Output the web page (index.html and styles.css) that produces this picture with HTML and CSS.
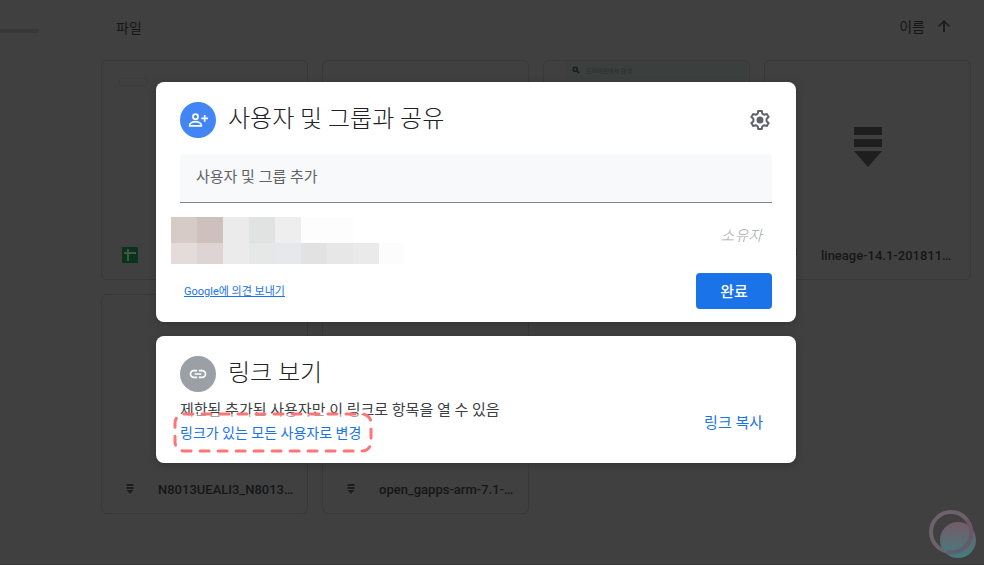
FILE: index.html
```html
<!DOCTYPE html>
<html lang="ko">
<head>
    <meta charset="UTF-8">
    <meta name="viewport" content="width=device-width, initial-scale=1.0">
    <title>사용자 및 그룹과 공유</title>
    <link rel="stylesheet" href="styles.css">
</head>
<body>
<svg class="sprite" aria-hidden="true">
    <symbol id="zip" viewBox="0 0 28 40">
        <path d="M0 0h28v8H0zM0 12h28v8H0zM0 24h28L14 40z"/>
    </symbol>
</svg>

<!-- Drive page, dimmed by the open dialog -->
<div class="drive">
    <aside class="sidebar">
        <div class="storage-bar"></div>
    </aside>
    <main class="files">
        <header class="files-header">
            <h2 class="files-title">파일</h2>
            <button class="sort" type="button">이름
                <svg class="sort-icon" viewBox="0 0 24 24"><path d="M4 12l1.400 1.400L10.800 8v12h2.400V8l5.400 5.400L20 12l-8-8z"/></svg>
            </button>
        </header>
        <div class="grid">
            <div class="card">
                <div class="preview"><div class="sheet-box"></div></div>
                <div class="card-name">
                    <svg class="sheet-icon" viewBox="0 0 16 16">
                        <rect width="16" height="16" rx="1" fill="#08331d"/>
                        <path d="M2 6h12M6 2v12" stroke="#4a524e" stroke-width="2"/>
                    </svg>
                </div>
            </div>
            <div class="card">
                <div class="preview"></div>
            </div>
            <div class="card">
                <div class="preview">
                    <div class="shot">
                        <svg class="shot-icon" viewBox="0 0 10 10"><circle cx="4" cy="4" r="2.500"/><path d="M6 6l3 3"/></svg>
                        <span>드라이브에서 검색</span>
                    </div>
                </div>
            </div>
            <div class="card">
                <div class="preview preview-zip"><svg class="zip-large"><use href="#zip"/></svg></div>
                <div class="card-name">
                    <svg class="zip-small"><use href="#zip"/></svg>
                    <span>lineage-14.1-201811…</span>
                </div>
            </div>
            <div class="card">
                <div class="preview"></div>
                <div class="card-name">
                    <svg class="zip-small"><use href="#zip"/></svg>
                    <span>N8013UEALI3_N8013…</span>
                </div>
            </div>
            <div class="card">
                <div class="preview"></div>
                <div class="card-name">
                    <svg class="zip-small"><use href="#zip"/></svg>
                    <span>open_gapps-arm-7.1-…</span>
                </div>
            </div>
        </div>
    </main>
</div>

<!-- Share dialog -->
<div class="overlay">
    <section class="panel share">
        <header class="panel-header">
            <span class="badge badge-blue">
                <svg viewBox="0 0 24 24">
                    <g fill="none" stroke="#fff" stroke-width="2">
                        <circle cx="9" cy="8" r="3"/>
                        <path d="M2 19v-1c0-2.700 4.700-4 7-4s7 1.300 7 4v1zM20 6v8M16 10h8"/>
                    </g>
                </svg>
            </span>
            <h1 class="panel-title">사용자 및 그룹과 공유</h1>
            <button class="settings" type="button" aria-label="설정">
                <svg viewBox="0 0 24 24">
                    <path d="M10.200 3h3.600l.5 2.600 2 1.200 2.500-.9 1.800 3.100-2 1.700v2.600l2 1.700-1.800 3.100-2.500-.9-2 1.200-.5 2.600h-3.600l-.5-2.600-2-1.200-2.500.9L3.400 15l2-1.700v-2.600L3.400 9l1.800-3.100 2.500.9 2-1.200z" fill="none" stroke="#5f6368" stroke-width="2" stroke-linejoin="round"/>
                    <circle cx="12" cy="12" r="3.500" fill="#5f6368"/>
                </svg>
            </button>
        </header>
        <input class="people" type="text" placeholder="사용자 및 그룹 추가" aria-label="사용자 및 그룹 추가">
        <div class="owner">
            <!-- pixelated account -->
            <svg class="mosaic" viewBox="0 0 234 47" shape-rendering="crispEdges" aria-hidden="true">
                <rect width="26" height="26" fill="#d7cbc7"/>
                <rect x="26" width="26" height="26" fill="#cec0bd"/>
                <rect x="52" width="26" height="47" fill="#ebebeb"/>
                <rect x="78" width="26" height="26" fill="#e0e3e2"/>
                <rect x="104" width="26" height="26" fill="#eeeeee"/>
                <rect x="130" width="52" height="26" fill="#fdfdfd"/>
                <rect y="26" width="26" height="21" fill="#e4dbdb"/>
                <rect x="26" y="26" width="26" height="21" fill="#ded4d2"/>
                <rect x="78" y="26" width="26" height="21" fill="#e5e8e7"/>
                <rect x="104" y="26" width="26" height="21" fill="#e6e8eb"/>
                <rect x="130" y="26" width="26" height="21" fill="#e2e2e2"/>
                <rect x="156" y="26" width="26" height="21" fill="#e7e7e7"/>
                <rect x="182" y="26" width="26" height="21" fill="#eaeaea"/>
                <rect x="208" y="26" width="25" height="21" fill="#fcfcfc"/>
            </svg>
            <span class="role">소유자</span>
        </div>
        <footer class="share-footer">
            <a class="feedback" href="#">Google에 의견 보내기</a>
            <button class="done" type="button">완료</button>
        </footer>
    </section>

    <section class="panel link">
        <header class="panel-header">
            <span class="badge badge-gray">
                <svg viewBox="0 0 24 24">
                    <path d="M11 8H7a4 4 0 0 0 0 8h4M13 8h4a4 4 0 0 1 0 8h-4M8 12h8" fill="none" stroke="#fff" stroke-width="2"/>
                </svg>
            </span>
            <h2 class="panel-title">링크 보기</h2>
        </header>
        <div class="link-body">
            <div class="link-text">
                <p class="link-desc">제한됨 추가된 사용자만 이 링크로 항목을 열 수 있음</p>
                <div class="change">
                    <svg class="marker" viewBox="0 0 200 42" aria-hidden="true">
                        <rect x="2" y="2" width="196" height="37" rx="9"/>
                    </svg>
                    <a class="change-link" href="#">링크가 있는 모든 사용자로 변경</a>
                </div>
            </div>
            <button class="copy" type="button">링크 복사</button>
        </div>
    </section>
</div>

<!-- Watermark -->
<svg class="watermark" viewBox="0 0 48 48" aria-hidden="true">
    <defs>
        <linearGradient id="fade" x1="0" y1="0" x2="0" y2="1">
            <stop offset="0" stop-color="#755b66"/>
            <stop offset="1" stop-color="#457c80"/>
        </linearGradient>
    </defs>
    <circle cx="22" cy="22" r="20" fill="none" stroke="#6d616a" stroke-width="4"/>
    <circle cx="29" cy="30" r="18" fill="url(#fade)"/>
    <path d="M38 10A20 20 0 0 1 18 42" fill="none" stroke="#6b4f66" stroke-width="4" opacity="0.6"/>
</svg>
</body>
</html>
```

FILE: styles.css
```css
* {
    box-sizing: border-box;
}
body {
    margin: 0;
    min-height: 100vh;
    background: #404040;
    color: #161617;
    font-family: Roboto, "Noto Sans CJK KR", sans-serif;
    font-size: 15px;
    overflow: hidden;
}
h1, h2, p {
    margin: 0;
    font-weight: 400;
}
button {
    border: none;
    padding: 0;
    background: none;
    font: inherit;
    color: inherit;
    cursor: pointer;
}
svg {
    display: block;
}
.sprite {
    display: none;
}

/* Drive page */
.drive {
    display: flex;
    min-height: 100vh;
    border-bottom: 1px solid #353535;
}
.sidebar {
    width: 101px;
    padding-top: 29px;
}
.storage-bar {
    width: 39px;
    height: 4px;
    border-radius: 0 2px 2px 0;
    background: #383838;
}
.files {
    flex: 1;
    padding-right: 13px;
}
.files-header {
    display: flex;
    justify-content: space-between;
    align-items: center;
    height: 60px;
    padding: 0 18px 6px 15px;
}
.files-title {
    font-size: 14px;
}
.sort {
    display: flex;
    align-items: center;
    gap: 10px;
    padding-bottom: 3px;
    font-size: 14px;
}
.sort-icon {
    width: 18px;
    height: 18px;
    fill: #1b1b1c;
}
.grid {
    display: grid;
    grid-template-columns: repeat(4, 1fr);
    gap: 14px;
}
.card {
    display: flex;
    flex-direction: column;
    height: 220px;
    border: 1px solid #383838;
    border-radius: 6px;
    overflow: hidden;
}
.preview {
    flex: 1;
}
.preview-zip {
    display: flex;
    justify-content: center;
    align-items: center;
    padding-top: 2px;
}
.zip-large {
    width: 28px;
    height: 40px;
    fill: #1e1e1e;
}
.zip-small {
    flex: none;
    width: 16px;
    height: 10px;
    fill: #1e1e1e;
}
.sheet-box {
    width: 28px;
    height: 8px;
    margin: 17px;
    border: 1px solid #3c3c3c;
    border-radius: 2px;
}
.sheet-icon {
    width: 16px;
    height: 16px;
}
.card-name {
    display: flex;
    align-items: center;
    gap: 20px;
    height: 48px;
    padding-left: 20px;
    font-size: 13px;
    font-weight: 500;
    white-space: nowrap;
}
.shot {
    display: flex;
    align-items: center;
    gap: 6px;
    height: 18px;
    margin-left: 22px;
    padding-left: 6px;
    background: #3b3f3e;
    color: #2a2c2c;
    font-size: 6px;
}
.shot-icon {
    width: 8px;
    height: 8px;
    fill: none;
    stroke: #1e1e1e;
    stroke-width: 2;
}

/* Dialog */
.overlay {
    position: absolute;
    inset: 0 32px 0 0;
    display: flex;
    flex-direction: column;
    align-items: center;
    gap: 14px;
    padding-top: 82px;
}
.panel {
    width: 640px;
    max-width: 100%;
    padding: 20px 24px 13px;
    border-radius: 8px;
    background: #fff;
    color: #202124;
    box-shadow: 0 2px 8px rgba(0, 0, 0, 0.2);
}
.panel-header {
    display: flex;
    align-items: center;
    gap: 12px;
    height: 36px;
}
.panel-title {
    flex: 1;
    padding-bottom: 2px;
    font-size: 24px;
    font-weight: 300;
    line-height: 32px;
}
.badge {
    display: flex;
    justify-content: center;
    align-items: center;
    width: 36px;
    height: 36px;
    border-radius: 50%;
}
.badge svg {
    width: 20px;
    height: 20px;
}
.badge-blue {
    background: #4285f4;
}
.badge-gray {
    background: #9aa0a6;
}
.settings svg {
    width: 24px;
    height: 24px;
}
.people {
    display: block;
    width: 100%;
    height: 49px;
    margin-top: 16px;
    padding: 0 16px 2px;
    border: none;
    border-bottom: 1px solid #80868b;
    border-radius: 4px 4px 0 0;
    background: #f8f9fb;
    font: inherit;
}
.people::placeholder {
    color: #5f6368;
    opacity: 1;
}
.owner {
    display: flex;
    justify-content: space-between;
    align-items: flex-start;
    height: 70px;
    padding: 14px 10px 0 0;
}
.mosaic {
    width: 234px;
    height: 47px;
    margin-left: -9px;
}
.role {
    color: #a6a8aa;
    font-style: italic;
    font-weight: 300;
    line-height: 38px;
}
.share-footer {
    display: flex;
    justify-content: space-between;
    align-items: center;
    padding-left: 4px;
}
.feedback {
    padding-bottom: 2px;
    color: #1a73e8;
    font-size: 11px;
}
.done {
    width: 76px;
    height: 36px;
    padding-bottom: 2px;
    border-radius: 4px;
    background: #1a73e8;
    color: #fff;
    font-weight: 500;
}
.link-body {
    display: flex;
    justify-content: space-between;
    align-items: center;
    padding: 7px 9px 6px 0;
}
.link-desc {
    color: #3c4043;
    line-height: 23px;
}
.change {
    position: relative;
    line-height: 22px;
}
.change-link {
    position: relative;
    color: #1a73e8;
    font-size: 14px;
    text-decoration: none;
}
/* Dashed highlight drawn over the link */
.marker {
    position: absolute;
    top: -10px;
    left: -7px;
    width: 200px;
    height: 42px;
    fill: rgba(255, 255, 255, 0.5);
    stroke: #ff7575;
    stroke-width: 3;
    stroke-linecap: round;
    stroke-dasharray: 9 9;
}
.copy {
    color: #1a73e8;
}
.watermark {
    position: fixed;
    right: 7px;
    bottom: 7px;
    width: 48px;
    height: 48px;
}
```
